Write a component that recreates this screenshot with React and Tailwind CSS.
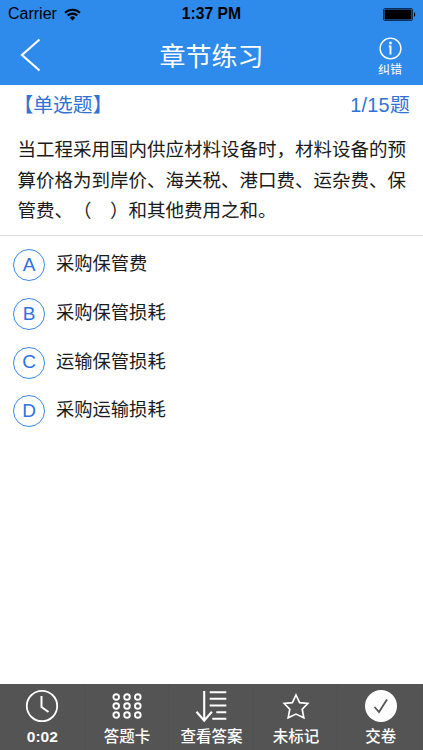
const OPTIONS = [
  { key: 'A', text: '采购保管费' },
  { key: 'B', text: '采购保管损耗' },
  { key: 'C', text: '运输保管损耗' },
  { key: 'D', text: '采购运输损耗' },
];

const QUESTION = [
  '当工程采用国内供应材料设备时，材料设备的预',
  '算价格为到岸价、海关税、港口费、运杂费、保',
  '管费、（　）和其他费用之和。',
];

function StatusBar() {
  return (
    <div className="grid h-7 grid-cols-3 items-center text-black">
      <div className="flex items-center gap-[7px] pl-2">
        <span className="text-base leading-7">Carrier</span>
        <svg width="17" height="13" viewBox="0 0 17 13" fill="none" stroke="currentColor" strokeWidth="2.1">
          <path d="M1 4.8a10.6 10.6 0 0 1 15 0" />
          <path d="M3.7 7.6a6.8 6.8 0 0 1 9.6 0" />
          <path d="M8.5 12.4 5.8 9.7a3.8 3.8 0 0 1 5.4 0z" fill="currentColor" stroke="none" />
        </svg>
      </div>
      <div className="text-center text-[15.7px] leading-7 font-bold">1:37 PM</div>
      <div className="flex justify-end pr-[7px]">
        <svg width="33" height="13" viewBox="0 0 33 13">
          <rect x="0.5" y="0.5" width="29" height="12" rx="1.5" fill="none" stroke="#0b2f5c" />
          <rect x="1.5" y="1.5" width="27" height="10" rx="1" fill="#000" />
          <path d="M31 4.2c1.6.6 1.6 4 0 4.6z" fill="#000" />
        </svg>
      </div>
    </div>
  );
}

function Header() {
  return (
    <header className="h-[85px] bg-[#2e8aeb]">
      <StatusBar />
      <div className="grid h-[57px] grid-cols-[80px_1fr_80px] text-white">
        <button type="button" className="flex items-center pb-1 pl-5">
          <svg width="22" height="34" viewBox="0 0 22 34" fill="none" stroke="currentColor" strokeWidth="2.2">
            <path d="M19.5 1.5 2 17l17.5 15.5" />
          </svg>
        </button>
        <h1 className="text-center text-[26px] leading-[58px]">章节练习</h1>
        <button type="button" className="flex flex-col items-center pt-[9px] pl-[14px]">
          <svg width="23" height="23" viewBox="0 0 23 23" fill="none" stroke="currentColor" strokeWidth="1.4">
            <circle cx="11.5" cy="11.5" r="10.4" />
            <circle cx="11.5" cy="6" r="1.4" fill="currentColor" stroke="none" />
            <path d="M9.8 9.3h1.7M11.5 8.7v8.8" strokeWidth="1.9" />
          </svg>
          <span className="mt-0.5 text-xs leading-4">纠错</span>
        </button>
      </div>
    </header>
  );
}

function ClockIcon() {
  return (
    <svg width="34" height="34" viewBox="0 0 34 34" fill="none" stroke="currentColor" strokeWidth="1.8">
      <circle cx="17" cy="17" r="15.2" />
      <path d="M16.5 7v11l7 5" strokeWidth="2" />
    </svg>
  );
}

function CardIcon() {
  return (
    <svg width="34" height="34" viewBox="0 0 34 34" fill="none" stroke="currentColor" strokeWidth="1.9">
      {[8, 17, 26].map((y) =>
        [6.2, 17, 27.8].map((x) => <circle key={`${x}-${y}`} cx={x} cy={y} r="2.8" />),
      )}
    </svg>
  );
}

function AnswerIcon() {
  return (
    <svg width="34" height="34" viewBox="0 0 34 34" fill="none" stroke="currentColor" strokeWidth="2.1">
      <path d="M10.2 2v30M2.5 22.7l7.7 9 7.7-9" />
      <path d="M15.7 3.2h16.6M15.7 9.8h16.6M15.7 16.5h16.6M22.3 23.3h10M18.3 29.8h14" />
    </svg>
  );
}

function StarIcon() {
  return (
    <svg width="34" height="34" viewBox="0 0 34 34" fill="none" stroke="currentColor" strokeWidth="1.7">
      <path d="M17 6l3.6 7.6 8.2.9-5.6 5.7 1.6 8.5-7.8-3.6-7.8 3.6 1.6-8.5-5.6-5.7 8.2-.9z" />
    </svg>
  );
}

function SubmitIcon() {
  return (
    <svg width="34" height="34" viewBox="0 0 34 34" fill="none">
      <circle cx="17" cy="17" r="16" fill="currentColor" />
      <path d="M10.5 18l4.5 5 8-12.5" stroke="#545454" strokeWidth="1.8" />
    </svg>
  );
}

const TABS = [
  { label: '0:02', Icon: ClockIcon },
  { label: '答题卡', Icon: CardIcon },
  { label: '查看答案', Icon: AnswerIcon },
  { label: '未标记', Icon: StarIcon },
  { label: '交卷', Icon: SubmitIcon },
];

export default function App() {
  return (
    <div className="flex h-screen w-full flex-col overflow-hidden bg-white font-['Liberation_Sans','Noto_Sans_CJK_SC',sans-serif] [text-spacing-trim:space-all]">
      <Header />

      <section className="h-[151px] border-b border-[#dedede]">
        <div className="flex h-10 items-center justify-between pt-0.5 pr-[13px] pl-[13.5px] text-[19.8px] text-[#2f72d9]">
          <span>【单选题】</span>
          <span className="tracking-[0.3px]">1/15题</span>
        </div>
        <div className="pt-2.5 pl-[17.5px] text-[18.5px] leading-[30.5px] whitespace-nowrap text-[#1a1a1a]">
          {QUESTION.map((line) => (
            <p key={line}>{line}</p>
          ))}
        </div>
      </section>

      <ul className="flex-1 space-y-[16.8px] pt-[13px] pl-[13px]">
        {OPTIONS.map((option) => (
          <li key={option.key} className="flex h-8 items-center gap-[11px]">
            <span className="flex size-8 items-center justify-center rounded-full border border-[#3b88ea] text-[19px] text-[#2f72e0]">
              {option.key}
            </span>
            <span className="pb-0.5 text-[18.3px] leading-7 text-[#1a1a1a]">{option.text}</span>
          </li>
        ))}
      </ul>

      <nav className="grid h-[66px] grid-cols-5 bg-[#545454] text-white">
        {TABS.map(({ label, Icon }) => (
          <button
            key={label}
            type="button"
            className="flex flex-col items-center pt-[5px] shadow-[inset_-1px_0_0_#505050]"
          >
            <Icon />
            <span className={`mt-1 text-[15.5px] leading-5 ${label === '0:02' ? 'font-bold' : 'font-medium'}`}>
              {label}
            </span>
          </button>
        ))}
      </nav>
    </div>
  );
}
